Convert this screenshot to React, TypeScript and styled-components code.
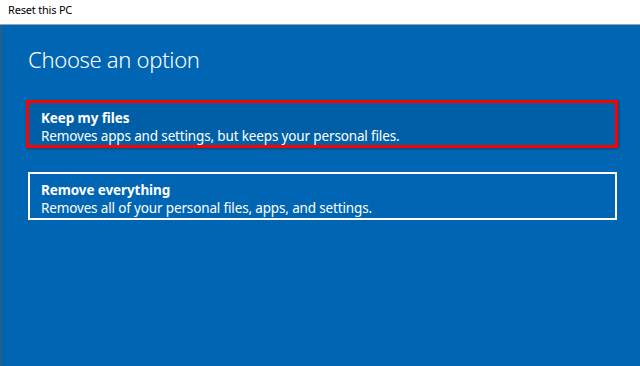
import React from "react";
import styled, { createGlobalStyle } from "styled-components";

interface OptionProps {
  title: string;
  text: string;
  selected?: boolean;
}

const options: OptionProps[] = [
  {
    title: "Keep my files",
    text: "Removes apps and settings, but keeps your personal files.",
    selected: true,
  },
  {
    title: "Remove everything",
    text: "Removes all of your personal files, apps, and settings.",
  },
];

const Option = ({ title, text, selected }: OptionProps) => {
  return (
    <OptionButton $selected={selected}>
      <OptionTitle>{title}</OptionTitle>
      <OptionText>{text}</OptionText>
    </OptionButton>
  );
};

const App = () => {
  return (
    <>
      <GlobalStyle />
      <Window>
        <TitleBar>Reset this PC</TitleBar>
        <Content>
          <Heading>Choose an option</Heading>
          <OptionList>
            {options.map((o) => (
              <Option key={o.title} {...o} />
            ))}
          </OptionList>
        </Content>
      </Window>
    </>
  );
};

export default App;

const GlobalStyle = createGlobalStyle`
  html, body {
    margin: 0;
    padding: 0;
    background: #0066b3;
  }
  body {
    font-family: "Noto Sans", "Open Sans", sans-serif;
  }
`;

const Window = styled.div`
  display: flex;
  flex-direction: column;
  height: 366px;
  width: 640px;
  overflow: hidden;
`;

const TitleBar = styled.div`
  background: #ffffff;
  border-bottom: 1px solid #a0a0a0;
  box-sizing: border-box;
  color: #000;
  font-size: 11px;
  letter-spacing: -0.2px;
  height: 25px;
  line-height: 20px;
  padding-left: 8px;
`;

const Content = styled.div`
  background: #0066b3;
  border-left: 1px solid #4a5560;
  flex: 1;
  padding: 0 22px 0 25px;
`;

const Heading = styled.h1`
  color: #fff;
  font-size: 22px;
  font-weight: 300;
  letter-spacing: -0.3px;
  line-height: 30px;
  margin: 19px 0 0 2px;
`;

const OptionList = styled.div`
  display: flex;
  flex-direction: column;
  gap: 24px;
  margin-top: 26px;
`;

const OptionButton = styled.div<{ $selected?: boolean }>`
  border: ${(p) => (p.$selected ? "3px solid #ff0000" : "2px solid #ffffff")};
  background: ${(p) => (p.$selected ? "#005fa6" : "transparent")};
  box-shadow: ${(p) =>
    p.$selected ? "1px 1px 3px rgba(0, 0, 0, 0.35)" : "none"};
  box-sizing: border-box;
  color: #fff;
  height: 48px;
  margin-left: ${(p) => (p.$selected ? "0" : "2px")};
  padding: ${(p) => (p.$selected ? "6px 12px 0" : "7px 11px 0")};
  width: ${(p) => (p.$selected ? "592px" : "589px")};
`;

const OptionTitle = styled.div`
  font-size: 13.5px;
  font-weight: 700;
  letter-spacing: -0.1px;
  line-height: 18px;
`;

const OptionText = styled.div`
  font-size: 13.5px;
  letter-spacing: -0.15px;
  line-height: 18px;
`;
